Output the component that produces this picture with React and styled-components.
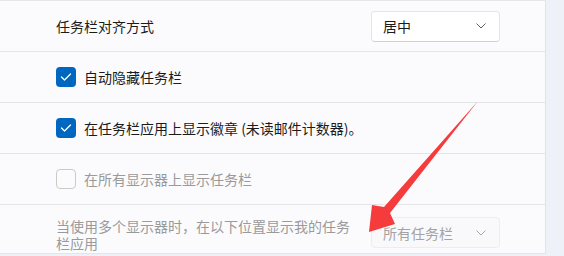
import styled, { createGlobalStyle } from "styled-components"

const GlobalStyle = createGlobalStyle`
  html, body {
    margin: 0;
    padding: 0;
    background: #eef1f8;
    font-family: "Noto Sans CJK SC", "Noto Sans", sans-serif;
    -webkit-font-smoothing: antialiased;
  }
`

const Page = styled.div`
  position: relative;
  width: 564px;
  height: 256px;
  overflow: hidden;
  background: #eef1f8;
`

const Card = styled.div`
  width: 545px;
  background: #fbfbfd;
  border-top: 1px solid #e6e6e9;
  border-right: 1px solid #e3e3e6;
`

const Row = styled.div`
  display: flex;
  align-items: ${(p) => (p.$top ? "flex-start" : "center")};
  justify-content: space-between;
  height: ${(p) => (p.$top ? "49px" : "51px")};
  box-sizing: border-box;
  padding: ${(p) => (p.$top ? "12px 45px 0 56px" : "0 45px 0 56px")};
  border-bottom: 1px solid #e5e5e8;
`

const Label = styled.div`
  font-size: 14px;
  line-height: 17px;
  color: ${(p) => (p.$disabled ? "#9a9a9a" : "#1b1b1b")};
  max-width: ${(p) => (p.$wrap ? "300px" : "none")};
  padding-top: ${(p) => (p.$wrap ? "1px" : "0")};
`

const CheckLine = styled.label`
  display: flex;
  align-items: center;
  gap: 8px;
`

const Box = styled.span`
  width: 20px;
  height: 20px;
  box-sizing: border-box;
  border-radius: 4px;
  display: flex;
  align-items: center;
  justify-content: center;
  background: ${(p) => (p.$checked ? "#0067c0" : "#fbfbfb")};
  border: ${(p) => (p.$checked ? "none" : "1px solid #cacaca")};
`

const Select = styled.div`
  width: 129px;
  height: 31px;
  box-sizing: border-box;
  display: flex;
  align-items: center;
  justify-content: space-between;
  padding: 0 13px 0 11px;
  border-radius: 4px;
  font-size: 14px;
  background: ${(p) => (p.$disabled ? "#f9f9fb" : "#ffffff")};
  color: ${(p) => (p.$disabled ? "#a3a3a3" : "#1b1b1b")};
  border: 1px solid ${(p) => (p.$disabled ? "#ededf0" : "#e5e5e5")};
  border-bottom-color: ${(p) => (p.$disabled ? "#ededf0" : "#d0d0d0")};
`

const Arrow = styled.svg`
  position: absolute;
  left: 0;
  top: 0;
  pointer-events: none;
`

function Chevron({ color }) {
  return (
    <svg width="10" height="6" viewBox="0 0 10 6">
      <polyline points="0.5,0.5 5,5 9.5,0.5" fill="none" stroke={color} strokeWidth="1" />
    </svg>
  )
}

function Check() {
  return (
    <svg width="12" height="10" viewBox="0 0 12 10">
      <polyline points="1.5,5 4.5,8 10.5,2" fill="none" stroke="#fff" strokeWidth="1.3" strokeLinecap="round" strokeLinejoin="round" />
    </svg>
  )
}

export default function App() {
  return (
    <Page>
      <GlobalStyle />
      <Card>
        <Row>
          <Label>任务栏对齐方式</Label>
          <Select>
            <span>居中</span>
            <Chevron color="#606060" />
          </Select>
        </Row>
        <Row>
          <CheckLine>
            <Box $checked>
              <Check />
            </Box>
            <Label>自动隐藏任务栏</Label>
          </CheckLine>
        </Row>
        <Row>
          <CheckLine>
            <Box $checked>
              <Check />
            </Box>
            <Label>在任务栏应用上显示徽章 (未读邮件计数器)。</Label>
          </CheckLine>
        </Row>
        <Row>
          <CheckLine>
            <Box />
            <Label $disabled>在所有显示器上显示任务栏</Label>
          </CheckLine>
        </Row>
        <Row $top>
          <Label $disabled $wrap>
            当使用多个显示器时，在以下位置显示我的任务栏应用
          </Label>
          <Select $disabled>
            <span>所有任务栏</span>
            <Chevron color="#a8a8a8" />
          </Select>
        </Row>
      </Card>
      <Arrow width="564" height="256" viewBox="0 0 564 256">
        <polygon
          points="478,101 390,213 395,224 369,232 372,205 384,207"
          fill="#f53b3b"
        />
      </Arrow>
    </Page>
  )
}
